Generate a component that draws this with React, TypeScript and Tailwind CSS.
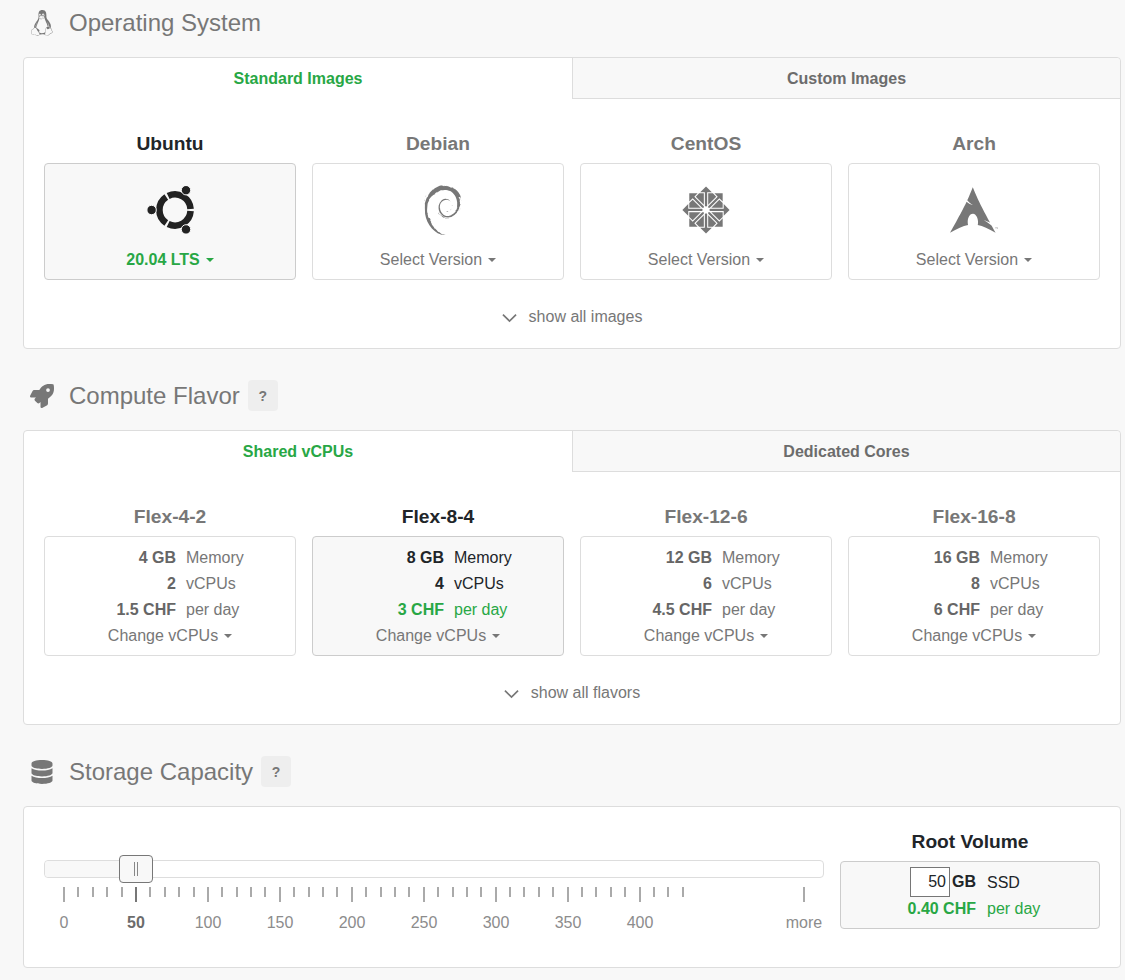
import React from 'react';
import { FaCentos, FaDatabase, FaLinux, FaRocket } from 'react-icons/fa';
import { SiArchlinux, SiDebian } from 'react-icons/si';

const polar = (r: number, deg: number) => {
  const a = (deg * Math.PI) / 180;
  return `${(29 + r * Math.cos(a)).toFixed(2)} ${(24 + r * Math.sin(a)).toFixed(2)}`;
};

const UbuntuIcon = () => (
  <svg viewBox="0 0 48 48" className="w-12 h-12">
    {[0, 120, 240].map((a) => (
      <path key={a} d={`M${polar(15.6, a + 4)} A15.6 15.6 0 0 1 ${polar(15.6, a + 116)}`} fill="none" stroke="#222" strokeWidth="6.6" />
    ))}
    <circle cx={5.6} cy="24" r="4.7" fill="#222" stroke="#f8f8f8" strokeWidth="1" />
    <circle cx={40} cy="4.2" r="4.7" fill="#222" stroke="#f8f8f8" strokeWidth="1" />
    <circle cx={40} cy="43.4" r="4.7" fill="#222" stroke="#f8f8f8" strokeWidth="1" />
  </svg>
);

const Caret = () => (
  <span className="inline-block ml-[6px] align-middle -translate-y-px w-0 h-0 border-t-[4px] border-t-current border-x-[4px] border-x-transparent" />
);

const Chevron = () => (
  <svg viewBox="0 0 16 10" className="w-[15px] h-[10px] mt-[2px]" fill="none" stroke="currentColor" strokeWidth="1.8">
    <path d="M1 1.5 L8 8.2 L15 1.5" />
  </svg>
);

const Heading = ({ icon, title, help }: { icon: React.ReactNode; title: string; help?: boolean }) => (
  <div className="h-[46px] mb-[11px] pl-[7px] flex items-center gap-[15px] text-[#777777]">
    <span className="w-6 flex justify-center text-2xl">{icon}</span>
    <h2 className="text-2xl">{title}</h2>
    {help && (
      <span className="-ml-[7px] -mt-px w-[30px] h-[31px] rounded bg-[#eeeeee] flex items-center justify-center text-sm font-bold">?</span>
    )}
  </div>
);

const Tabs = ({ left, right }: { left: string; right: string }) => (
  <div className="flex h-[41px] font-bold">
    <div className="w-1/2 flex items-center justify-center text-[#28a745]">{left}</div>
    <div className="w-1/2 pt-px flex items-center justify-center bg-[#f8f8f8] border-l border-b border-[#dddddd] rounded-tr text-[#6c6c6c]">{right}</div>
  </div>
);

const ShowAll = ({ label }: { label: string }) => (
  <div className="h-[68px] pt-[6px] flex items-center justify-center gap-3 text-[#777777]">
    <Chevron />
    <span>{label}</span>
  </div>
);

const images = [
  { name: 'Ubuntu', version: '20.04 LTS', active: true, icon: <UbuntuIcon /> },
  { name: 'Debian', version: 'Select Version', icon: <SiDebian preserveAspectRatio="none" className="ml-[10px] w-[46px] h-[50px] text-[#777777]" /> },
  { name: 'CentOS', version: 'Select Version', icon: <FaCentos className="w-[54px] h-[54px] shrink-0 text-[#777777]" /> },
  { name: 'Arch', version: 'Select Version', icon: <SiArchlinux className="w-12 h-12 text-[#777777]" /> },
];

const flavors = [
  { name: 'Flex-4-2', mem: '4 GB', cpus: '2', price: '1.5 CHF' },
  { name: 'Flex-8-4', mem: '8 GB', cpus: '4', price: '3 CHF', active: true },
  { name: 'Flex-12-6', mem: '12 GB', cpus: '6', price: '4.5 CHF' },
  { name: 'Flex-16-8', mem: '16 GB', cpus: '8', price: '6 CHF' },
];

const cardTitle = (active?: boolean) =>
  `h-6 mb-2 pt-[2px] flex items-center justify-center text-[19.2px] font-bold ${active ? 'text-[#212529]' : 'text-[#777777]'}`;
const cardBox = (active?: boolean) =>
  `border rounded ${active ? 'bg-[#f8f8f8] border-[#cccccc]' : 'bg-white border-[#dddddd]'}`;

const Stat = ({ value, label, active, green }: { value: string; label: string; active?: boolean; green?: boolean }) => (
  <div className={`grid grid-cols-[131px_1fr] gap-x-[10px] h-[26px] items-center ${green && active ? 'text-[#28a745]' : active ? 'text-[#212529]' : 'text-[#777777]'}`}>
    <b className={active ? 'text-right' : 'text-right text-[#666666]'}>{value}</b>
    <span>{label}</span>
  </div>
);

const Ticks = () => (
  <div className="flex items-start h-[15px]">
    <div className="flex ml-[12.8px]">
      {Array.from({ length: 44 }, (_, i) => (
        <div key={i} className="w-[14.4px] flex justify-center">
          {i % 5 === 0 ? (
            <span className={`w-[2px] h-[15px] ${i === 5 ? 'bg-[#777777]' : 'bg-[#aaaaaa]'}`} />
          ) : (
            <span className="w-[2px] h-[10px] bg-[#aaaaaa]" />
          )}
        </div>
      ))}
    </div>
    <div className="ml-auto w-10 flex justify-center">
      <span className="w-[2px] h-[15px] bg-[#aaaaaa]" />
    </div>
  </div>
);

export default function App() {
  return (
    <div className="min-h-[980px] bg-[#f8f8f8] pl-[23px] pr-1 font-['Liberation_Sans',Arial,sans-serif] text-base text-[#777777]">
      <Heading icon={<FaLinux className="w-[26px] h-[26px] shrink-0" />} title="Operating System" />
      <section className="bg-white border border-[#dddddd] rounded">
        <Tabs left="Standard Images" right="Custom Images" />
        <div className="px-5 pt-8 grid grid-cols-4 gap-4">
          {images.map((img) => (
            <div key={img.name}>
              <div className={cardTitle(img.active)}>{img.name}</div>
              <div className={`h-[117px] pt-[22px] flex flex-col items-center ${cardBox(img.active)}`}>
                <div className="h-12 flex items-center justify-center">{img.icon}</div>
                <div className={`mt-[14px] ${img.active ? 'font-bold text-[#28a745]' : ''}`}>
                  {img.version}
                  <Caret />
                </div>
              </div>
            </div>
          ))}
        </div>
        <ShowAll label="show all images" />
      </section>

      <div className="mt-6">
        <Heading icon={<FaRocket className="w-6 h-6" />} title="Compute Flavor" help />
      </div>
      <section className="bg-white border border-[#dddddd] rounded">
        <Tabs left="Shared vCPUs" right="Dedicated Cores" />
        <div className="px-5 pt-8 grid grid-cols-4 gap-4">
          {flavors.map((f) => (
            <div key={f.name}>
              <div className={cardTitle(f.active)}>{f.name}</div>
              <div className={`h-[120px] pt-2 ${cardBox(f.active)}`}>
                <Stat value={f.mem} label="Memory" active={f.active} />
                <Stat value={f.cpus} label="vCPUs" active={f.active} />
                <Stat value={f.price} label="per day" active={f.active} green />
                <div className="h-[26px] flex items-center justify-center">
                  <span>
                    Change vCPUs
                    <Caret />
                  </span>
                </div>
              </div>
            </div>
          ))}
        </div>
        <ShowAll label="show all flavors" />
      </section>

      <div className="mt-6">
        <Heading icon={<FaDatabase className="w-6 h-6" />} title="Storage Capacity" help />
      </div>
      <section className="bg-white border border-[#dddddd] rounded px-5 pt-[22px] pb-8 flex gap-4">
        <div className="w-[780px] pt-[31px]">
          <div className="relative h-[18px] border border-[#dddddd] rounded bg-white mb-[9px]">
            <div className="h-full w-[80px] bg-[#f8f8f8] rounded-l" />
            <div className="absolute left-[74px] -top-[6px] w-[34px] h-[28px] rounded border border-[#777777] bg-[#f8f8f8] flex items-center justify-center gap-[2px]">
              <span className="w-px h-[14px] bg-[#888888]" />
              <span className="w-px h-[14px] bg-[#888888]" />
            </div>
          </div>
          <Ticks />
          <div className="flex mt-[9px] h-6 items-center text-[#8c8c8c]">
            <div className="flex -ml-4">
              {['0', '50', '100', '150', '200', '250', '300', '350', '400'].map((n) => (
                <span key={n} className={`w-[72px] text-center ${n === '50' ? 'font-bold text-[#6c6c6c]' : ''}`}>{n}</span>
              ))}
            </div>
            <span className="ml-auto w-10 text-center">more</span>
          </div>
        </div>
        <div className="w-[260px]">
          <div className={cardTitle(true)}>Root Volume</div>
          <div className="h-[68px] border border-[#cccccc] rounded bg-[#f8f8f8] pt-[5px]">
            <div className="grid grid-cols-[135px_1fr] gap-x-[11px] h-[30px] items-center text-[#212529]">
              <div className="flex items-center justify-end gap-[2px]">
                <input readOnly value="50" className="w-10 h-[30px] border border-[#767676] bg-white text-right pr-[3px] text-[#212529] outline-none" />
                <b>GB</b>
              </div>
              <span className="pt-px">SSD</span>
            </div>
            <div className="-mt-px grid grid-cols-[135px_1fr] gap-x-[11px] h-[26px] items-center text-[#28a745]">
              <b className="text-right">0.40 CHF</b>
              <span>per day</span>
            </div>
          </div>
        </div>
      </section>
    </div>
  );
}
